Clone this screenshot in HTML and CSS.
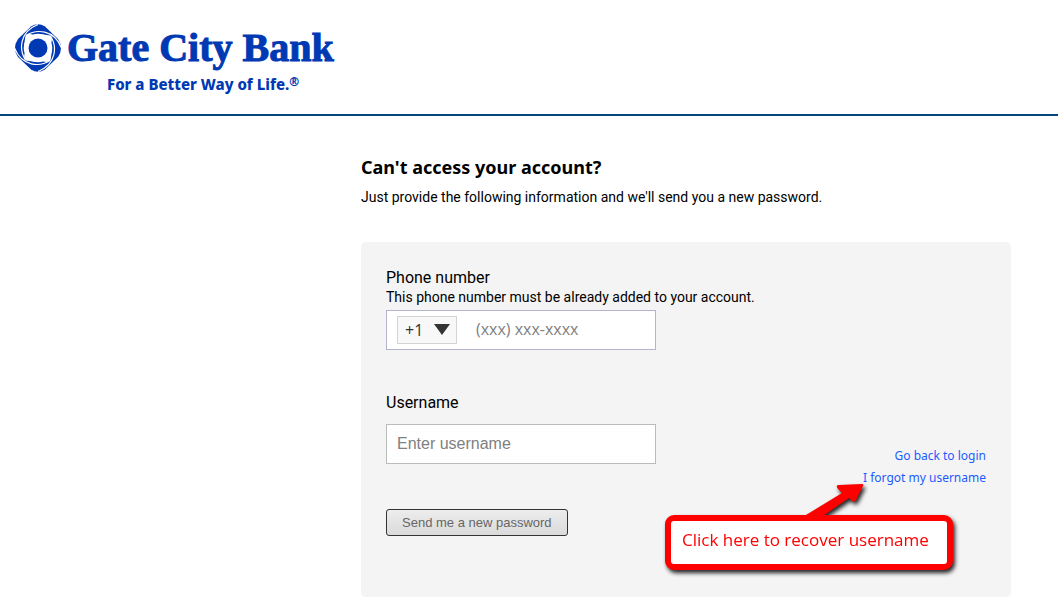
FILE: index.html
```html
<!DOCTYPE html>
<html lang="en">
<head>
<meta charset="utf-8">
<meta name="viewport" content="width=device-width, initial-scale=1">
<title>Gate City Bank</title>
<link rel="stylesheet" href="styles.css">
</head>
<body>
<header class="header">
  <svg class="symbol" viewBox="0 0 48 48" aria-hidden="true">
    <path class="blue" d="M17 2.500Q24 -2 31 2.500L44 15Q50 24 44 33L31 45.500Q24 50 17 45.500L4 33Q-2 24 4 15Z"/>
    <circle class="white" cx="24" cy="24" r="14.3"/>
    <g id="swirl">
      <path class="white" d="M10 22L11.500 11.500Q14 9 20 11Z"/>
      <path class="line" d="M12 11.500C22 5 40 5 47.500 24"/>
    </g>
    <use href="#swirl" transform="rotate(90 24 24)"/>
    <use href="#swirl" transform="rotate(180 24 24)"/>
    <use href="#swirl" transform="rotate(270 24 24)"/>
    <circle class="blue" cx="24" cy="24" r="9.5"/>
  </svg>
  <div class="brand">
    <div class="brand-name">Gate City Bank</div>
    <div class="tagline">For a Better Way of Life.<sup class="reg">®</sup></div>
  </div>
</header>
<main class="main">
  <h1 class="title">Can't access your account?</h1>
  <p class="intro">Just provide the following information and we'll send you a new password.</p>
  <form class="panel">
    <div class="fields">
      <label class="label" for="phone">Phone number</label>
      <p class="hint" id="phone-hint">This phone number must be already added to your account.</p>
      <div class="phone">
        <select class="code" aria-label="Country code"><option>+1</option></select>
        <svg class="caret" viewBox="0 0 16 11" aria-hidden="true"><path d="M0 0H16L8 11Z"/></svg>
        <input class="phone-input" id="phone" type="tel" placeholder="(xxx) xxx-xxxx" aria-describedby="phone-hint">
      </div>
      <label class="label user-label" for="username">Username</label>
      <input class="user-input" id="username" type="text" placeholder="Enter username">
      <button class="submit" type="button">Send me a new password</button>
    </div>
    <nav class="links">
      <a class="link" href="#login">Go back to login</a>
      <a class="link" href="#forgot">I forgot my username</a>
      <div class="callout">
        <svg class="arrow" viewBox="0 0 64 40" aria-hidden="true"><path d="M-3 38L38 13L34 9Q31 5 35 5L58 4Q60 4 59 6L52 20Q50 23 47 20L45 18L16 38Z"/></svg>
        <div class="bubble">Click here to recover username</div>
      </div>
    </nav>
  </form>
</main>
</body>
</html>
```
FILE: styles.css
```css
* { box-sizing: border-box; }
body {
  margin: 0;
  background: #fff;
  color: #000;
  font-family: Roboto, "Noto Sans", sans-serif;
  font-size: 14px;
}
.header {
  display: flex;
  gap: 5px;
  height: 116px;
  padding: 24px 14px 0;
  border-bottom: 2px solid #04457f;
  color: #0039b3;
}
.symbol { width: 48px; height: 48px; }
.blue { fill: #0039b3; }
.white { fill: #fff; }
.line { fill: none; stroke: #fff; stroke-width: 1.2; }
.brand-name {
  font: bold 40px/48px "Liberation Serif", serif;
  -webkit-text-stroke: 1px #0039b3;
}
.tagline {
  padding-left: 40px;
  font: 800 15px/24px "Noto Sans", sans-serif;
}
.reg { font-size: 12px; line-height: 1; vertical-align: 4px; }
.main { padding: 39px 47px 7px 361px; }
.title { margin: 0; font: bold 18px/24px "Noto Sans", sans-serif; }
.intro { margin: 8px 0 35px; line-height: 20px; }
.panel {
  display: flex;
  justify-content: space-between;
  padding: 26px 25px 61px;
  border-radius: 5px;
  background: #f4f4f4;
}
.fields { display: flex; flex-direction: column; align-items: flex-start; }
.label { font-size: 16px; line-height: 20px; }
.hint { margin: 0 0 3px; line-height: 19px; white-space: nowrap; }
.phone {
  position: relative;
  display: flex;
  align-items: center;
  width: 270px;
  height: 40px;
  padding: 0 10px;
  border: 1px solid #b2b5cb;
  background: #fff;
}
.code {
  appearance: none;
  width: 60px;
  height: 28px;
  padding: 0 7px;
  border: 1px solid #d3d3d3;
  border-radius: 0;
  background: #f8f8f8;
  color: #333;
  font: 16px "Open Sans", sans-serif;
}
.caret {
  position: absolute;
  left: 47px;
  top: 13px;
  width: 16px;
  height: 11px;
  fill: #333;
  pointer-events: none;
}
.phone-input {
  flex: 1;
  min-width: 0;
  height: 36px;
  margin-left: 19px;
  padding: 0 0 2px;
  border: 0;
  background: none;
  font: 16px "Open Sans", sans-serif;
}
.user-label { margin: 43px 0 11px; }
.user-input {
  width: 270px;
  height: 40px;
  padding: 0 10px;
  border: 1px solid #bbb;
  font: 16px "Liberation Sans", sans-serif;
}
.phone-input::placeholder, .user-input::placeholder { color: #808080; }
.submit {
  margin-top: 45px;
  height: 27px;
  padding: 0 15px;
  border: 1px solid #333;
  border-radius: 3px;
  background: linear-gradient(#ededed, #dadada);
  color: #666;
  font: 13px "Liberation Sans", sans-serif;
}
.links {
  position: relative;
  display: flex;
  flex-direction: column;
  align-items: flex-end;
  gap: 2px;
  padding-top: 178px;
}
.link {
  color: #1c5cff;
  font: 12px/20px "Noto Sans", sans-serif;
  text-decoration: none;
  white-space: nowrap;
}
.callout {
  position: absolute;
  right: 33px;
  top: 247px;
  filter: drop-shadow(2px 3px 2px #222);
}
.arrow {
  position: absolute;
  right: 85px;
  top: -35px;
  width: 64px;
  height: 40px;
  overflow: visible;
  fill: #f00;
}
.bubble {
  width: 288px;
  height: 55px;
  padding: 6px 11px;
  border: 6px solid #f00;
  border-radius: 9px;
  background: #fff;
  color: #f00;
  font: 17px/26px "Open Sans", sans-serif;
  white-space: nowrap;
}
```
